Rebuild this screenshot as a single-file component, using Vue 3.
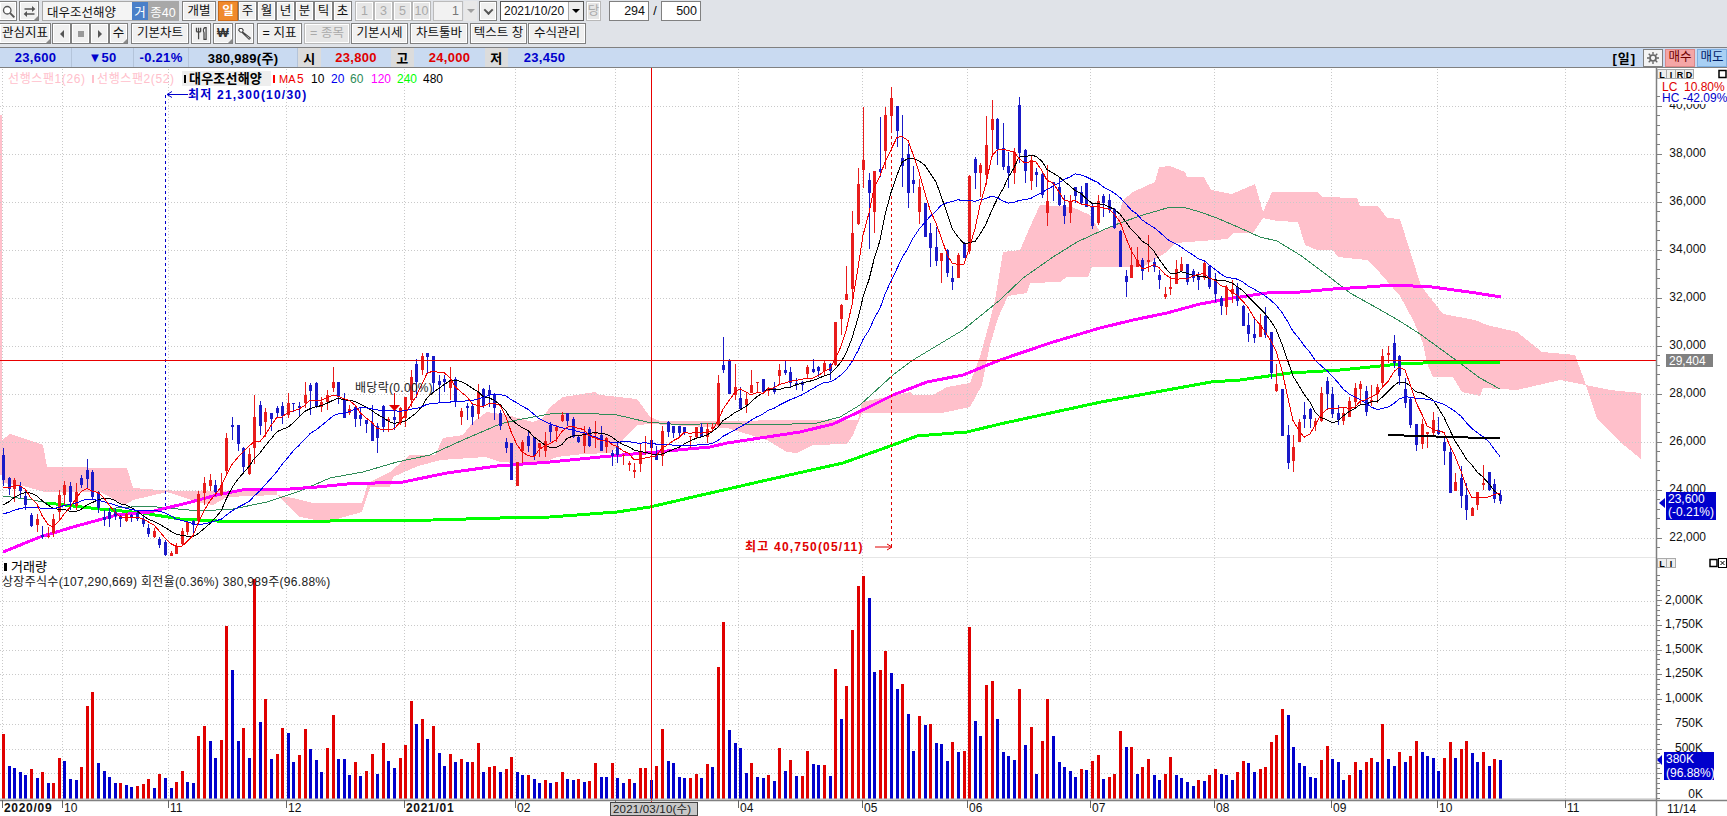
<script setup>
// 차트 데이터: 캔들은 [색 고가 시가쪽 종가쪽 저가], y는 base + v / 3 (화면 픽셀)
const candleBlocks = [
  { base: 420, rows: 'B 85 105 180 197;B 170 175 208 225;R 175 180 208 245;B 185 197 212 235;B 210 228 255 270;B 278 284 318 322;R 283 296 315 335;B 318 345 350 358;R 320 348 352 353;R 282 297 340 350;R 210 225 275 300;R 183 195 225 255;B 185 198 245 270;R 190 216 258 270;B 165 175 195 205;B 118 150 178 205;B 150 155 232 240;B 212 215 265 280;B 270 292 300 318;B 265 277 298 320;B 265 275 288 300;B 285 290 298 322;R 280 283 303 305;B 282 285 292 305;B 275 280 297 302;B 288 297 312 322;B 313 324 342 352;R 325 333 352 355;B 352 358 376 383;B 360 366 405 408;R 393 400 408 408;R 370 380 402 402;R 325 332 373 378;R 305 305 335 345;B 300 303 315 345;R 213 222 303 305;R 172 190 220 255;R 163 180 198 212;B 180 195 215 227;R 160 195 225 228' },
  { base: 340, rows: 'R 278 295 392 405;B 232 255 262 300;B 255 255 312 332;B 322 324 380 398;R 325 343 402 405;R 165 232 325 372;B 183 195 257 285;R 205 216 246 290;B 220 220 236 272;B 198 205 218 235;B 185 198 228 252;R 160 190 225 235;B 190 190 193 215;B 185 197 204 228;R 127 165 188 205;B 130 135 153 225;B 127 128 198 205;R 170 185 200 215;R 150 165 185 210;R 82 127 145 155;B 125 125 170 192;B 160 178 235 235;R 195 206 218 225;B 195 202 238 262;B 200 225 238 258;B 240 240 252 280;B 195 250 303 303;B 250 258 293 338;B 195 198 262 275;R 230 236 243 275;B 160 232 240 270;R 200 205 250 255;R 170 170 235 262;R 90 110 180 200;B 58 72 125 175;R 40 48 90 105;B 40 40 50 100;B 48 48 130 160;B 105 122 135 190;B 105 118 127 155;R 82 122 145 180;B 110 118 185 200;R 205 212 232 255;B 190 198 204 240;B 190 198 230 255;R 132 155 222 238;B 145 148 198 205;B 135 150 165 200;B 160 165 205 240;B 210 220 258 270' },
  { base: 300, rows: 'B 415 425 445 460;B 430 430 540 540;R 485 485 558 558;R 420 427 452 490;B 395 408 437 455;B 410 412 468 480;R 430 430 445 470;R 395 422 452 470;B 365 375 397 425;R 375 380 393 425;R 335 345 362 365;B 338 338 362 378;B 352 356 412 415;B 405 410 425 430;R 378 398 438 460;B 382 388 438 440;R 362 395 402 445;B 378 405 452 452;R 410 415 440 460;B 450 458 468 497;B 423 438 465 488;R 462 465 468 495;R 482 490 496 512;R 490 510 515 533;R 428 452 493 515;R 408 455 458 465;B 420 420 445 460;B 438 466 480 480;R 378 392 468 497;B 362 367 397 412;B 378 378 398 415;B 378 378 400 415;B 380 380 398 405;R 408 408 412 443;R 380 380 412 418;B 368 380 412 412;R 370 387 412 430;R 370 380 388 395;R 225 249 375 378;B 110 195 210 218;B 178 180 283 283;R 192 262 285 300;B 262 295 328 328;R 280 297 315 340;R 210 255 278 278;R 245 245 250 278;B 237 237 275 277;R 262 265 272 288;B 245 265 275 282;R 192 210 228 255;B 182 210 220 225;B 200 215 248 260;B 235 248 254 270;B 243 245 255 272;R 195 200 222 235;B 178 207 215 218;B 198 200 212 232;R 180 190 212 228;B 190 192 212 240;R 65 65 195 198;R 12 15 57 105' },
  { base: 80, rows: 'R 558 642 660 660;R 393 460 628 660;R 265 312 432 435;R 82 240 270 325;B 278 300 338 508;R 272 272 395 460;B 110 266 276 290;R 82 105 212 268;R 22 55 108 158;B 78 78 152 200;B 105 235 258 320;B 192 222 338 383;B 258 300 312 338;R 298 322 395 432;B 368 370 470 472;B 428 458 503 560;B 442 500 542 558;R 518 518 542 608;B 508 510 578 592;B 558 594 605 630;R 520 525 593 593;B 485 493 534 535;R 285 288 512 522;B 232 238 280 326;R 250 255 280 350;R 108 195 285 315;R 60 117 150 232;B 115 118 206 255;B 128 205 262 270;B 215 258 278 325;R 205 215 280 312;B 52 75 218 250;B 208 210 272 308;R 226 240 302 330;B 265 276 285 322;B 275 282 345 355;R 255 363 398 437;B 305 305 312 362;B 293 320 375 378;B 345 375 407 432;R 345 365 400 428;B 320 322 348 370;B 318 335 368 375;B 310 310 380 380;B 368 380 438 447;R 345 362 430 435' },
  { base: 150, rows: 'B 132 138 160 200;B 132 150 180 190;B 175 178 235 237;B 240 242 350 350;B 360 378 395 440;R 290 345 383 385;R 292 330 352 352;B 325 330 362 390;R 255 330 335 365;B 325 335 352 365;B 360 375 390 418;R 410 432 440 447;R 378 410 417 435;R 330 357 402 402;R 322 342 362 365;B 342 342 395 405;B 358 362 385 395;B 365 378 390 420;R 335 338 385 390;B 345 348 410 418;B 368 388 432 455;B 437 445 467 495;R 405 410 472 495;R 390 417 433 458;B 400 412 452 468;B 466 468 527 528;B 490 525 553 575;B 507 552 565 578;R 492 525 560 562;B 470 497 555 565' },
  { base: 320, rows: 'B 35 37 160 178;R 132 192 213 215;B 207 207 347 347;B 315 345 430 447;R 345 380 423 455;R 298 305 365 367;B 247 285 298 325;B 265 267 297 325;R 295 302 315 332;R 202 220 302 305;B 170 183 222 268;B 200 222 282 295;B 255 280 300 315;R 265 280 302 315;R 232 243 290 290;R 190 205 245 262;R 183 192 207 253;B 197 212 275 288;R 195 240 245 258;R 192 200 222 250;R 88 108 188 205;R 78 100 105 130;B 45 70 128 145;B 105 108 168 195;B 175 207 248 265;B 235 237 315 325;B 312 312 375 392;R 298 312 372 388;R 335 337 342 383;R 277 300 338 345;B 292 330 343 345;B 355 367 393 435;B 383 397 518 518;R 460 487 513 513;B 438 475 527 563;B 490 525 570 600;R 562 565 587 588;R 515 517 555 570;R 435 490 495 510;B 456 457 510 512;B 478 492 537 548;B 510 525 542 552' }
]

// 거래량 막대 높이 (1/3 픽셀), 양수 빨강 / 음수 파랑
const volumes = [194,-98,-92,-80,-71,89,-62,80,-47,47,122,-113,-59,-56,95,278,320,-107,-83,-65,-47,47,-41,-35,38,44,59,-32,74,-62,-32,50,83,-50,-47,188,218,-173,-122,176,519,-386,-173,212,-122,659,-230,299,-119,134,212,-197,-110,131,209,-149,-116,-80,152,251,-119,-119,-71,110,-68,83,134,-74,167,-113,-92,122,161,293,-224,239,-179,218,-137,-98,134,-110,119,-110,110,167,-80,95,98,-80,89,125,-80,-71,71,-59,-47,56,-47,50,80,-59,-56,59,-50,53,107,-65,-65,107,-62,-47,59,-47,92,92,-56,98,209,-113,-107,-65,-62,62,74,-62,104,-95,395,530,-206,-167,-152,-77,107,-65,-62,71,-53,152,-83,116,-68,
  69,144,-105,-102,102,-69,390,-240,339,507,639,669,-603,-381,387,444,-378,-330,345,-255,-144,249,-222,225,-168,-165,-114,171,-141,144,516,-234,-189,342,354,-240,-141,-129,-117,330,-162,216,-75,174,300,-189,-111,-96,-84,-66,90,-87,114,132,-60,66,75,204,-156,156,-75,96,120,-72,-57,75,126,-72,-63,-51,-39,57,-54,72,90,-75,-72,-57,81,114,-108,-81,90,96,171,192,270,-252,-156,-108,-99,-66,-63,117,159,-120,-111,-57,72,111,-87,111,123,-111,225,-120,-99,141,-111,129,174,-141,-129,-123,-84,123,171,-123,150,174,-138,-111,141,-99,120,-117]

const barX = (i) => Math.round(3 + i * 5.585)

const candles = candleBlocks.flatMap((block) =>
  block.rows.split(';').map((row) => {
    const [color, ...vals] = row.split(' ')
    const [high, top, bottom, low] = vals.map((v) => block.base + Number(v) / 3)
    return { color, high, top, bottom, low }
  })
)
candles.forEach((c, i) => { c.x = barX(i) })

const volumeBars = volumes.map((v, i) => ({
  x: barX(i) - 1,
  h: Math.abs(v) / 3,
  up: v > 0
}))

// 이동평균은 종가(화면 y)에서 계산. 앞쪽은 차트 밖 과거값으로 채운다
const closes = [...Array(10).fill(523), ...Array(5).fill(522), ...Array(4).fill(490), ...candles.map((c) => (c.color === 'R' ? c.top : c.bottom))]
function movingAverage(n) {
  const pts = []
  for (let i = 19; i < closes.length; i++) {
    const slice = closes.slice(i - n + 1, i + 1)
    const avg = slice.reduce((a, b) => a + b, 0) / n
    pts.push(`${barX(i - 19)},${avg.toFixed(1)}`)
  }
  return pts.join(' ')
}
const ma5 = movingAverage(5)
const ma10 = movingAverage(10)
const ma20 = movingAverage(20)

const ma60 = '3,496 33,500 57,505 100,509 147,506 167,508 200,511 233,509 267,502 300,491 330,478 363,472 397,462 430,455 463,440 500,424 517,420 550,414 580,413 617,415 647,422 683,425 717,423 767,425 817,423 840,417 860,405 893,375 913,360 963,330 1000,300 1023,278 1053,257 1077,242 1103,230 1120,223 1143,215 1167,208 1183,207 1200,212 1217,218 1240,228 1260,237 1277,241 1300,255 1327,275 1350,293 1377,308 1398,320 1420,334 1453,358 1480,378 1500,389'
const ma120 = '3,552 40,537 73,527 117,515 150,512 187,503 217,495 247,489 290,489 317,487 347,484 403,482 447,473 497,466 550,462 600,457 667,451 710,447 727,443 767,437 800,432 833,424 867,408 893,395 927,382 963,375 1000,360 1050,343 1100,328 1133,320 1167,313 1200,304 1233,298 1267,293 1300,292 1333,289 1367,287 1393,285 1432,287 1476,293 1501,297'
const ma240 = '47,503 100,509 143,513 180,519 217,521 330,521 433,520 500,518 550,517 617,512 650,507 693,497 767,480 843,463 893,445 917,436 967,432 1000,424 1101,402 1211,382 1240,380 1290,373 1340,370 1400,364 1447,362 1500,362'

const cloud = '2,440 10,434 43,445 47,467 127,468 133,488 160,490 183,491 277,490 277,495 293,498 313,503 362,503 368,483 390,472 410,455 435,455 443,438 463,435 473,422 487,412 507,415 533,422 543,418 550,407 563,397 595,392 600,395 637,399 643,407 650,417 660,421 858,420 862,402 910,392 913,395 933,395 947,387 970,383 980,357 990,320 995,300 1003,252 1020,250 1030,227 1040,205 1072,207 1090,215 1100,232 1116,225 1123,200 1133,192 1155,182 1159,167 1170,166 1185,172 1187,177 1204,177 1211,190 1232,194 1255,184 1263,212 1272,192 1317,192 1322,197 1357,198 1360,206 1378,206 1387,218 1400,219 1421,286 1443,314 1475,320 1487,325 1517,332 1542,352 1575,355 1586,385 1610,390 1641,393 1641,459 1619,441 1597,418 1586,385 1560,380 1530,387 1517,390 1483,388 1480,396 1462,392 1453,377 1433,377 1427,363 1423,343 1413,320 1400,296 1380,273 1367,260 1338,257 1333,250 1317,250 1305,245 1298,222 1277,221 1263,218 1253,233 1233,233 1227,239 1175,243 1168,251 1143,267 1092,267 1088,277 1067,277 1060,282 1030,283 1027,293 1008,296 998,318 990,345 982,385 970,407 942,413 862,413 853,435 847,444 813,445 797,453 787,452 767,440 727,428 650,424 637,425 623,440 610,453 583,454 557,457 543,463 517,463 500,462 485,457 441,460 418,466 393,477 390,487 370,487 362,512 337,519 330,523 300,517 277,495 227,497 213,505 197,502 167,492 133,500 125,505 100,492 45,492 20,485 2,483'

const priceLabels = [
  { y: 106, text: '40,000' }, { y: 154, text: '38,000' }, { y: 202, text: '36,000' }, { y: 250, text: '34,000' },
  { y: 298, text: '32,000' }, { y: 346, text: '30,000' }, { y: 394, text: '28,000' }, { y: 442, text: '26,000' },
  { y: 490, text: '24,000' }, { y: 538, text: '22,000' }
]
const volumeLabels = [
  { y: 600.5, text: '2,000K' }, { y: 625, text: '1,750K' }, { y: 650, text: '1,500K' }, { y: 674, text: '1,250K' },
  { y: 699, text: '1,000K' }, { y: 724, text: '750K' }, { y: 749, text: '500K' }, { y: 773, text: '250K' }
]
const months = [
  { x: 2, label: '2020/09', bold: true }, { x: 62, label: '10' }, { x: 168, label: '11' }, { x: 286, label: '12' },
  { x: 404, label: '2021/01', bold: true }, { x: 515, label: '02' }, { x: 615, label: '' }, { x: 738, label: '04' },
  { x: 862, label: '05' }, { x: 967, label: '06' }, { x: 1090, label: '07' }, { x: 1214, label: '08' },
  { x: 1331, label: '09' }, { x: 1437, label: '10' }, { x: 1565, label: '11' }
]

const priceTicks = []
for (let y = 96.4; y < 556; y += 9.6) priceTicks.push(y)
const volumeTicks = []
for (let y = 798.5; y > 575; y -= 4.95) volumeTicks.push(y)

const periods = ['주', '월', '년', '분', '틱', '초']
const minutes = ['1', '3', '5', '10']
const quotes = [
  { text: '23,600', cls: 'blue w72' }, { text: '▼50', cls: 'blue w62' }, { text: '-0.21%', cls: 'blue w55' },
  { text: '380,989(주)', cls: 'w109' }, { text: '시', cls: 'tag' }, { text: '23,800', cls: 'red w70' },
  { text: '고', cls: 'tag' }, { text: '24,000', cls: 'red w71' }, { text: '저', cls: 'tag' }, { text: '23,450', cls: 'blue w73 open' }
]
</script>

<template>
  <div class="screen">
    <div class="toolbar">
      <div class="row row-one">
        <button class="btn icon w18 shift-left">
          <svg viewBox="0 0 18 18"><circle cx="7.5" cy="7.5" r="4.5" fill="#fff" stroke="#555" stroke-width="1.6"/><path d="M11 11l5 5" stroke="#555" stroke-width="2.4"/></svg>
        </button>
        <button class="btn icon w20 gap-2 corner">
          <svg viewBox="0 0 18 18"><path d="M3 7V5h9V2.5L16 6l-4 3.500V7zM15 11v2H6v2.500L2 12l4-3.500V11z" fill="#555"/></svg>
        </button>
        <div class="name-box">
          <span class="name">대우조선해양</span>
          <span class="badge-one">거</span>
          <span class="badge-two">종40</span>
        </div>
        <button class="btn w34 gap-3">개별</button>
        <button class="btn w20 gap-2 active">일</button>
        <button v-for="p in periods" :key="p" class="btn w19">{{ p }}</button>
        <button v-for="m in minutes" :key="m" class="btn w19 off" :class="{ first: m === '1' }">{{ m }}</button>
        <div class="input w30 gap-2 disabled-input">1</div>
        <button class="spin"><i class="down gray"></i></button>
        <button class="btn w18 gap-2"><i class="chev"></i></button>
        <div class="date-box">
          <span>2021/10/20</span>
          <span class="date-drop"><i class="down"></i></span>
        </div>
        <button class="btn w15 gap-2 off">당</button>
        <div class="input w40 gap-8">294</div>
        <span class="slash">/</span>
        <div class="input w40">500</div>
      </div>
      <div class="row row-two">
        <button class="btn w52 shift-left-two corner">관심지표</button>
        <div class="nav-group">
          <button class="btn w19"><i class="tri-left"></i></button>
          <button class="btn w19"><i class="square"></i></button>
          <button class="btn w19"><i class="tri-right"></i></button>
          <button class="btn w19 corner">수</button>
        </div>
        <button class="btn w58 gap-3">기본차트</button>
        <button class="btn icon w20 gap-2">
          <svg viewBox="0 0 18 18"><path d="M3 2v5M5.500 2v5M8 2v5M3 7h5M5.500 7v9M13 2c-2 1-2 4-1 6v8h2.500V2z" fill="none" stroke="#444" stroke-width="1.500"/></svg>
        </button>
        <button class="btn w20 gap-2 corner won">₩</button>
        <button class="btn icon w19 gap-2">
          <svg viewBox="0 0 18 18"><path d="M3 3l3 0 1.500 2-.8 2L16 14.500 14.500 16 6 7.500l-2-.2L2 5z" fill="#fff" stroke="#444" stroke-width="1.300"/></svg>
        </button>
        <button class="btn w45 gap-3">= 지표</button>
        <button class="btn w46 gap-2 off">= 종목</button>
        <button class="btn w57 gap-1">기본시세</button>
        <button class="btn w58 gap-2">차트툴바</button>
        <button class="btn w57 gap-2">텍스트 창</button>
        <button class="btn w58 gap-1">수식관리</button>
      </div>
    </div>

    <div class="quote-bar">
      <div v-for="q in quotes" :key="q.text" class="quote" :class="q.cls">{{ q.text }}</div>
      <div class="quote-right">
        <span class="period">[일]</span>
        <button class="gear">
          <svg viewBox="0 0 14 14"><circle cx="7" cy="7" r="3.500" fill="none" stroke="#666" stroke-width="2"/><path d="M7 0v3M7 11v3M0 7h3M11 7h3M2 2l2 2M10 10l2 2M12 2l-2 2M4 10l-2 2" stroke="#666" stroke-width="1.600"/></svg>
        </button>
        <button class="trade buy">매수</button>
        <button class="trade sell">매도</button>
      </div>
    </div>

    <svg class="chart" viewBox="0 68 1727 748">
      <!-- 일목 구름대 -->
      <rect x="0" y="115" width="2" height="360" fill="#ffc0cb" />
      <polygon :points="cloud" fill="#ffc0cb" shape-rendering="crispEdges" />

      <!-- 격자 -->
      <g class="grid">
        <line v-for="m in months" :key="m.x" :x1="m.x + 0.5" y1="69" :x2="m.x + 0.5" y2="800" />
        <line v-for="p in priceLabels" :key="p.y" x1="0" :y1="p.y + 0.5" x2="1656" :y2="p.y + 0.5" />
        <line v-for="v in volumeLabels" :key="v.y" x1="0" :y1="Math.round(v.y) + 0.5" x2="1656" :y2="Math.round(v.y) + 0.5" />
      </g>
      <line x1="0" y1="557.5" x2="1656" y2="557.5" stroke="#e6e6e6" />

      <!-- 기간 이평선 -->
      <polyline :points="ma60" class="line" stroke="#2e8b57" stroke-width="1" />
      <polyline :points="ma240" class="line" stroke="#00ff00" stroke-width="3" />
      <polyline :points="ma120" class="line" stroke="#ff00ff" stroke-width="3" />

      <!-- 최저/최고 표시 -->
      <line x1="165.5" y1="95" x2="165.5" y2="510" stroke="#0000cc" stroke-dasharray="3 3" />
      <line x1="891.5" y1="100" x2="891.5" y2="547" stroke="#e00000" stroke-dasharray="3 3" />

      <!-- 캔들 -->
      <g v-for="(c, i) in candles" :key="i" :class="c.color === 'R' ? 'up' : 'down-c'" shape-rendering="crispEdges">
        <rect :x="c.x" :y="c.high" width="1" :height="Math.max(c.low - c.high, 1)" />
        <rect :x="c.x - 1" :y="c.top" width="3" :height="Math.max(c.bottom - c.top, 1)" />
      </g>

      <polyline :points="ma10" class="line" stroke="#000" stroke-width="1" />
      <polyline :points="ma20" class="line" stroke="#0000ee" stroke-width="1" />
      <polyline :points="ma5" class="line" stroke="#f00000" stroke-width="1" />
      <line x1="1388" y1="435" x2="1500" y2="438.5" stroke="#000" stroke-width="2" shape-rendering="crispEdges" />

      <!-- 거래량 -->
      <rect
        v-for="(b, i) in volumeBars"
        :key="'v' + i"
        :x="b.x"
        :y="798.5 - b.h"
        width="3"
        :height="b.h"
        :fill="b.up ? '#e00000' : '#0000cc'"
        shape-rendering="crispEdges"
      />
      <line x1="0" y1="799" x2="1656" y2="799" stroke="#bbb" />

      <!-- 십자선 -->
      <line x1="0" y1="360.5" x2="1656" y2="360.5" stroke="#e80000" />
      <line x1="651.5" y1="68" x2="651.5" y2="803" stroke="#e80000" />

      <!-- 범례 -->
      <text x="8" y="83" class="txt pale">선행스팬1(26)</text>
      <rect x="92" y="75" width="2" height="8" fill="#ffc0cb" />
      <text x="97" y="83" class="txt pale">선행스팬2(52)</text>
      <rect x="182" y="71" width="89" height="15" fill="#eee" />
      <rect x="184" y="75" width="2" height="8" fill="#000" />
      <text x="189" y="83" class="txt bold">대우조선해양</text>
      <rect x="273" y="75" width="2" height="8" fill="#f00" />
      <text x="279" y="83" class="txt narrow" fill="#f00000">MA</text>
      <text x="297" y="83" class="txt" fill="#f00000">5</text>
      <text x="311" y="83" class="txt" fill="#000">10</text>
      <text x="331" y="83" class="txt" fill="#0000ee">20</text>
      <text x="350" y="83" class="txt" fill="#2e8b57">60</text>
      <text x="371" y="83" class="txt" fill="#ff00ff">120</text>
      <text x="397" y="83" class="txt" fill="#00ff00">240</text>
      <text x="423" y="83" class="txt" fill="#000">480</text>

      <path d="M167 94.5h21M167 94.5l5-3M167 94.5l5 3" stroke="#0000cc" fill="none" />
      <text x="188" y="99" class="txt note" fill="#0000cc">최저 21,300(10/30)</text>
      <text x="745" y="551" class="txt note" fill="#e00000">최고 40,750(05/11)</text>
      <path d="M875 547h17M892 547l-5-3M892 547l-5 3" stroke="#e00000" fill="none" />

      <text x="355" y="392" class="txt spaced" fill="#222">배당락(0.00%)</text>
      <line x1="394.5" y1="393" x2="394.5" y2="405" stroke="#e00000" />
      <polygon points="389,405 400,405 394.5,411" fill="#e00000" />

      <rect x="4" y="563" width="3" height="8" fill="#000" />
      <text x="11" y="571" class="txt big" fill="#000">거래량</text>
      <text x="2" y="586" class="txt spaced" fill="#222">상장주식수(107,290,669) 회전율(0.36%) 380,989주(96.88%)</text>

      <!-- 오른쪽 축 -->
      <g v-for="p in priceLabels" :key="'pl' + p.y">
        <text x="1706" :y="p.y + 3" class="txt axis" text-anchor="end">{{ p.text }}</text>
      </g>
      <rect x="1658" y="80" width="69" height="24" fill="#fff" />
      <text x="1662" y="91" class="txt" fill="#e00000">LC&#160;&#160;10.80%</text>
      <text x="1662" y="102" class="txt" fill="#0000cc">HC&#160;-42.09%</text>

      <g v-for="v in volumeLabels" :key="'vl' + v.y">
        <text x="1703" :y="v.y + 3" class="txt axis" text-anchor="end">{{ v.text }}</text>
      </g>
      <text x="1703" y="798" class="txt axis" text-anchor="end">0K</text>

      <line x1="1656.5" y1="68" x2="1656.5" y2="816" stroke="#808080" stroke-width="1.5" />
      <line x1="0" y1="800.5" x2="1727" y2="800.5" stroke="#808080" stroke-width="1.5" />
      <g stroke="#808080" shape-rendering="crispEdges">
        <line v-for="t in priceTicks" :key="'pt' + t" x1="1657" :y1="t" x2="1660" :y2="t" />
        <line v-for="p in priceLabels" :key="'pm' + p.y" x1="1657" :y1="p.y" x2="1662" :y2="p.y" />
        <line v-for="t in volumeTicks" :key="'vt' + t" x1="1657" :y1="t" x2="1660" :y2="t" />
        <line v-for="v in volumeLabels" :key="'vm' + v.y" x1="1657" :y1="v.y" x2="1662" :y2="v.y" />
      </g>

      <!-- 현재가, 거래량 꼬리표 -->
      <rect x="1666" y="354" width="47" height="13" fill="#808080" />
      <text x="1669" y="365" class="txt" fill="#fff">29,404</text>
      <polygon points="1659,503 1665,498 1665,508" fill="#0000cc" />
      <rect x="1666" y="492" width="50" height="28" fill="#0000cc" />
      <text x="1668" y="503" class="txt" fill="#fff">23,600</text>
      <text x="1668" y="516" class="txt" fill="#fff">(-0.21%)</text>
      <polygon points="1657,760 1662,755 1662,765" fill="#0000cc" />
      <rect x="1664" y="752" width="50" height="28" fill="#0000cc" />
      <text x="1666" y="763" class="txt" fill="#fff">380K</text>
      <text x="1666" y="777" class="txt" fill="#fff">(96.88%)</text>

      <!-- L I R D 버튼 -->
      <g v-for="(l, i) in ['L', 'I', 'R', 'D']" :key="l">
        <rect :x="1657.5 + i * 9" y="69.5" width="9" height="9" fill="#eee" stroke="#aaa" />
        <text :x="1662 + i * 9" y="77.5" class="mini" text-anchor="middle">{{ l }}</text>
      </g>
      <rect x="1719" y="70.5" width="7" height="7" fill="#fff" stroke="#000" stroke-width="1.5" />
      <g v-for="(l, i) in ['L', 'I']" :key="'b' + l">
        <rect :x="1657.5 + i * 9" y="558.5" width="9" height="9" fill="#eee" stroke="#aaa" />
        <text :x="1662 + i * 9" y="566.5" class="mini" text-anchor="middle">{{ l }}</text>
      </g>
      <rect x="1710" y="559.5" width="7" height="7" fill="#fff" stroke="#000" stroke-width="1.5" />
      <rect x="1718.5" y="558.5" width="8" height="9" fill="#fff" stroke="#000" />
      <path d="M1720.5 561l4 4M1724.5 561l-4 4" stroke="#000" />

      <!-- 날짜 축 -->
      <g v-for="m in months" :key="'d' + m.x">
        <line :x1="m.x + 0.5" y1="800" :x2="m.x + 0.5" y2="808" stroke="#666" />
        <text v-if="m.label" :x="m.x + 2" y="812" class="txt date" :class="{ 'date-year': m.bold }">{{ m.label }}</text>
      </g>
      <text x="1667" y="813" class="txt date">11/14</text>
      <rect x="610.5" y="802.5" width="87" height="13" fill="#c8c8c8" stroke="#444" />
      <text x="613" y="812.5" class="txt tip">2021/03/10(수)</text>
    </svg>
  </div>
</template>

<style scoped>
.screen {
  width: 1727px;
  height: 816px;
  display: flex;
  flex-direction: column;
  overflow: hidden;
  background: #fff;
  font-family: 'Liberation Sans', 'Noto Sans CJK KR', sans-serif;
}

/* 툴바 */
.toolbar {
  height: 47px;
  flex-shrink: 0;
  background: #e0e3e8;
  box-sizing: border-box;
  padding-top: 1px;
  display: flex;
  flex-direction: column;
  gap: 2px;
}

.row {
  display: flex;
  align-items: stretch;
  gap: 0;
}

.row-one {
  height: 20px;
}

.row-two {
  height: 21px;
}

.btn {
  position: relative;
  box-sizing: border-box;
  height: 100%;
  padding: 0;
  border: 1px solid #808080;
  box-shadow: inset 0 0 0 1px #fff;
  background: #f0f0f0;
  color: #111;
  font-family: inherit;
  font-size: 12.5px;
  line-height: 1;
  display: flex;
  align-items: center;
  justify-content: center;
  flex-shrink: 0;
  white-space: nowrap;
}

.btn.icon svg {
  width: 15px;
  height: 15px;
}

.corner::after {
  content: '';
  position: absolute;
  right: 0;
  bottom: 0;
  border-left: 4px solid transparent;
  border-bottom: 4px solid #888;
}

.btn.active {
  background: #f08a2c;
  border-color: #c96a1a;
  box-shadow: none;
  color: #fff;
  font-weight: 700;
}

.btn.off {
  color: #a9a9a9;
  border-color: #b8b8b8;
  background: #e6e6e6;
}

.btn.first {
  margin-left: 3px;
}

.w15 { width: 15px; }
.w18 { width: 18px; }
.w19 { width: 19px; }
.w20 { width: 20px; }
.w34 { width: 34px; }
.w45 { width: 45px; }
.w46 { width: 46px; }
.w52 { width: 52px; }
.w57 { width: 57px; }
.w58 { width: 58px; }

.shift-left { margin-left: -1px; }
.shift-left-two { margin-left: -1px; }
.gap-1 { margin-left: 1px; }
.gap-2 { margin-left: 2px; }
.gap-3 { margin-left: 3px; }
.gap-8 { margin-left: 8px; }

.name-box {
  width: 137px;
  margin-left: 3px;
  box-sizing: border-box;
  border: 1px solid #a8a8a8;
  background: #f4f4f4;
  display: flex;
  align-items: center;
  font-size: 12.5px;
  color: #111;
  flex-shrink: 0;
}

.name {
  flex: 1;
  padding-left: 4px;
}

.badge-one,
.badge-two {
  height: 100%;
  display: flex;
  align-items: center;
  justify-content: center;
  color: #fff;
}

.badge-one {
  width: 16px;
  background: #4a7fc8;
}

.badge-two {
  width: 30px;
  background: #a8a8a8;
}

.input {
  box-sizing: border-box;
  border: 1px solid #808080;
  background: #fff;
  font-size: 12.5px;
  text-align: right;
  padding-right: 3px;
  line-height: 18px;
  color: #111;
  flex-shrink: 0;
}

.w30 { width: 30px; }
.w40 { width: 40px; }

.disabled-input {
  background: #f2f2f2;
  border-color: #bbb;
  color: #777;
}

.slash {
  width: 12px;
  text-align: center;
  font-size: 12.5px;
  line-height: 20px;
}

.spin {
  width: 13px;
  padding: 0;
  border: none;
  background: #e8e8e8;
  margin-left: 1px;
  display: flex;
  align-items: center;
  justify-content: center;
}

.down {
  display: block;
  width: 0;
  height: 0;
  border-left: 4px solid transparent;
  border-right: 4px solid transparent;
  border-top: 4px solid #000;
}

.down.gray {
  border-top-color: #a0a0a0;
}

.chev {
  display: block;
  width: 5px;
  height: 5px;
  border-right: 2px solid #555;
  border-bottom: 2px solid #555;
  transform: rotate(45deg) translate(-1px, -1px);
}

.date-box {
  width: 84px;
  margin-left: 3px;
  box-sizing: border-box;
  border: 1px solid #555;
  background: #fff;
  display: flex;
  align-items: center;
  justify-content: space-between;
  font-size: 12px;
  padding-left: 3px;
  color: #111;
  flex-shrink: 0;
}

.date-drop {
  width: 14px;
  height: 100%;
  background: #eee;
  border-left: 1px solid #aaa;
  display: flex;
  align-items: center;
  justify-content: center;
}

.nav-group {
  display: flex;
  margin-left: 1px;
  gap: 0;
}

.tri-left,
.tri-right {
  display: block;
  width: 0;
  height: 0;
  border-top: 4px solid transparent;
  border-bottom: 4px solid transparent;
}

.tri-left { border-right: 4px solid #555; }
.tri-right { border-left: 4px solid #555; }

.square {
  display: block;
  width: 6px;
  height: 6px;
  background: #999;
}

.won {
  font-weight: 700;
  color: #333;
}

/* 시세 바 */
.quote-bar {
  height: 21px;
  flex-shrink: 0;
  box-sizing: border-box;
  background: #c9daf1;
  border-top: 1px solid #808080;
  border-bottom: 1px solid #808080;
  display: flex;
  align-items: stretch;
}

.quote {
  display: flex;
  align-items: center;
  justify-content: center;
  box-sizing: border-box;
  border-right: 1px solid #b4c4da;
  font-size: 13px;
  letter-spacing: 0.3px;
  font-weight: 700;
  color: #000;
}

.quote.blue { color: #0000cc; }
.quote.red { color: #e00000; }
.quote.open { border-right: none; }

.w72 { width: 72px; }
.w62 { width: 62px; }
.w55 { width: 55px; }
.w109 { width: 109px; }
.w70 { width: 70px; border-right: none; }
.w71 { width: 71px; border-right: none; }
.w73 { width: 73px; }

.quote.tag {
  width: 23px;
  background: #dcdcdc;
  border-right: none;
}

.quote-right {
  margin-left: auto;
  display: flex;
  align-items: center;
}

.period {
  font-size: 13px;
  font-weight: 700;
  letter-spacing: 1px;
  margin-right: 7px;
  white-space: nowrap;
}

.gear {
  width: 20px;
  height: 18px;
  padding: 2px;
  border: 1px solid #808080;
  background: #f4f4f4;
  display: flex;
  align-items: center;
  justify-content: center;
}

.gear svg {
  width: 12px;
  height: 12px;
}

.trade {
  width: 30px;
  height: 18px;
  padding: 0;
  margin-left: 2px;
  font-family: inherit;
  font-size: 12.5px;
  line-height: 1;
}

.buy {
  background: #f4a6a6;
  border: 1px solid #d88;
  color: #700000;
}

.sell {
  background: #a8d0f4;
  border: 1px solid #7fb0e0;
  color: #00206a;
}

/* 차트 */
.chart {
  width: 1727px;
  height: 748px;
  display: block;
  flex-shrink: 0;
}

.grid line {
  stroke: #c9c9c9;
  stroke-dasharray: 1 2;
}

.line {
  fill: none;
  stroke-linejoin: round;
  shape-rendering: crispEdges;
}

.up { fill: #e81c1c; }
.down-c { fill: #1a1ac8; }

.txt {
  font-family: 'Liberation Sans', 'Noto Sans CJK KR', sans-serif;
  font-size: 12px;
}

.txt.pale { fill: #ffc0cb; letter-spacing: 0.6px; }
.txt.bold { font-size: 13px; font-weight: 700; fill: #000; letter-spacing: 0.2px; }
.txt.narrow { font-size: 11px; }
.txt.note { font-size: 12px; font-weight: 700; letter-spacing: 1.2px; }
.txt.spaced { letter-spacing: 0.3px; }
.txt.big { font-size: 13px; }
.txt.axis { fill: #111; }
.txt.date { fill: #111; }
.txt.date-year { font-weight: 700; letter-spacing: 0.7px; }
.txt.tip { fill: #222; font-size: 11.5px; letter-spacing: 0.2px; }

.mini {
  font-family: 'Liberation Sans', sans-serif;
  font-size: 9px;
  font-weight: 700;
  fill: #000;
}
</style>
